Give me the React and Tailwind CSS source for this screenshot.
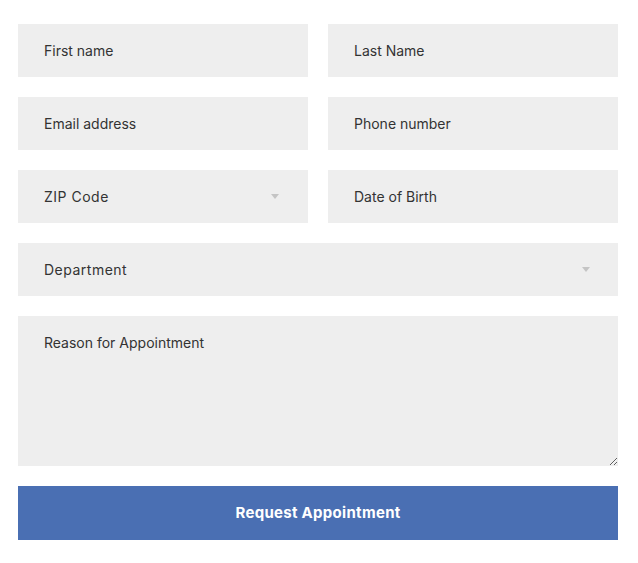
export default function App() {
  const field =
    'w-full h-[53px] bg-[#eeeeee] px-[26px] text-[14px] text-[#333] placeholder:text-[#333] outline-none'
  const font = { fontFamily: 'Inter, "Liberation Sans", sans-serif' }

  return (
    <div className="min-h-screen bg-white px-[18px] pt-[24px]" style={font}>
      <form className="w-[600px] flex flex-col gap-[20px]">
        <div className="grid grid-cols-2 gap-x-[20px]">
          <input className={field} placeholder="First name" />
          <input className={field} placeholder="Last Name" />
        </div>
        <div className="grid grid-cols-2 gap-x-[20px]">
          <input className={field} placeholder="Email address" />
          <input className={field} placeholder="Phone number" />
        </div>
        <div className="grid grid-cols-2 gap-x-[20px]">
          <div className="relative">
            <select className={`${field} appearance-none tracking-[0.5px]`} defaultValue="">
              <option value="">ZIP Code</option>
            </select>
            <span className="pointer-events-none absolute right-[29px] top-[24px] w-0 h-0 border-x-[4px] border-x-transparent border-t-[5px] border-t-[#c4c4c4]" />
          </div>
          <input className={field} placeholder="Date of Birth" />
        </div>
        <div className="relative">
          <select className={`${field} appearance-none tracking-[0.5px]`} defaultValue="">
            <option value="">Department</option>
          </select>
          <span className="pointer-events-none absolute right-[28px] top-[24px] w-0 h-0 border-x-[4px] border-x-transparent border-t-[5px] border-t-[#c4c4c4]" />
        </div>
        <textarea
          className="w-full h-[150px] bg-[#eeeeee] px-[26px] pt-[16px] text-[14px] text-[#333] placeholder:text-[#333] outline-none block"
          placeholder="Reason for Appointment"
        />
        <button
          type="button"
          className="w-full h-[54px] bg-[#4a6fb3] text-white text-[15px] font-bold tracking-[0.3px]"
        >
          Request Appointment
        </button>
      </form>
    </div>
  )
}
